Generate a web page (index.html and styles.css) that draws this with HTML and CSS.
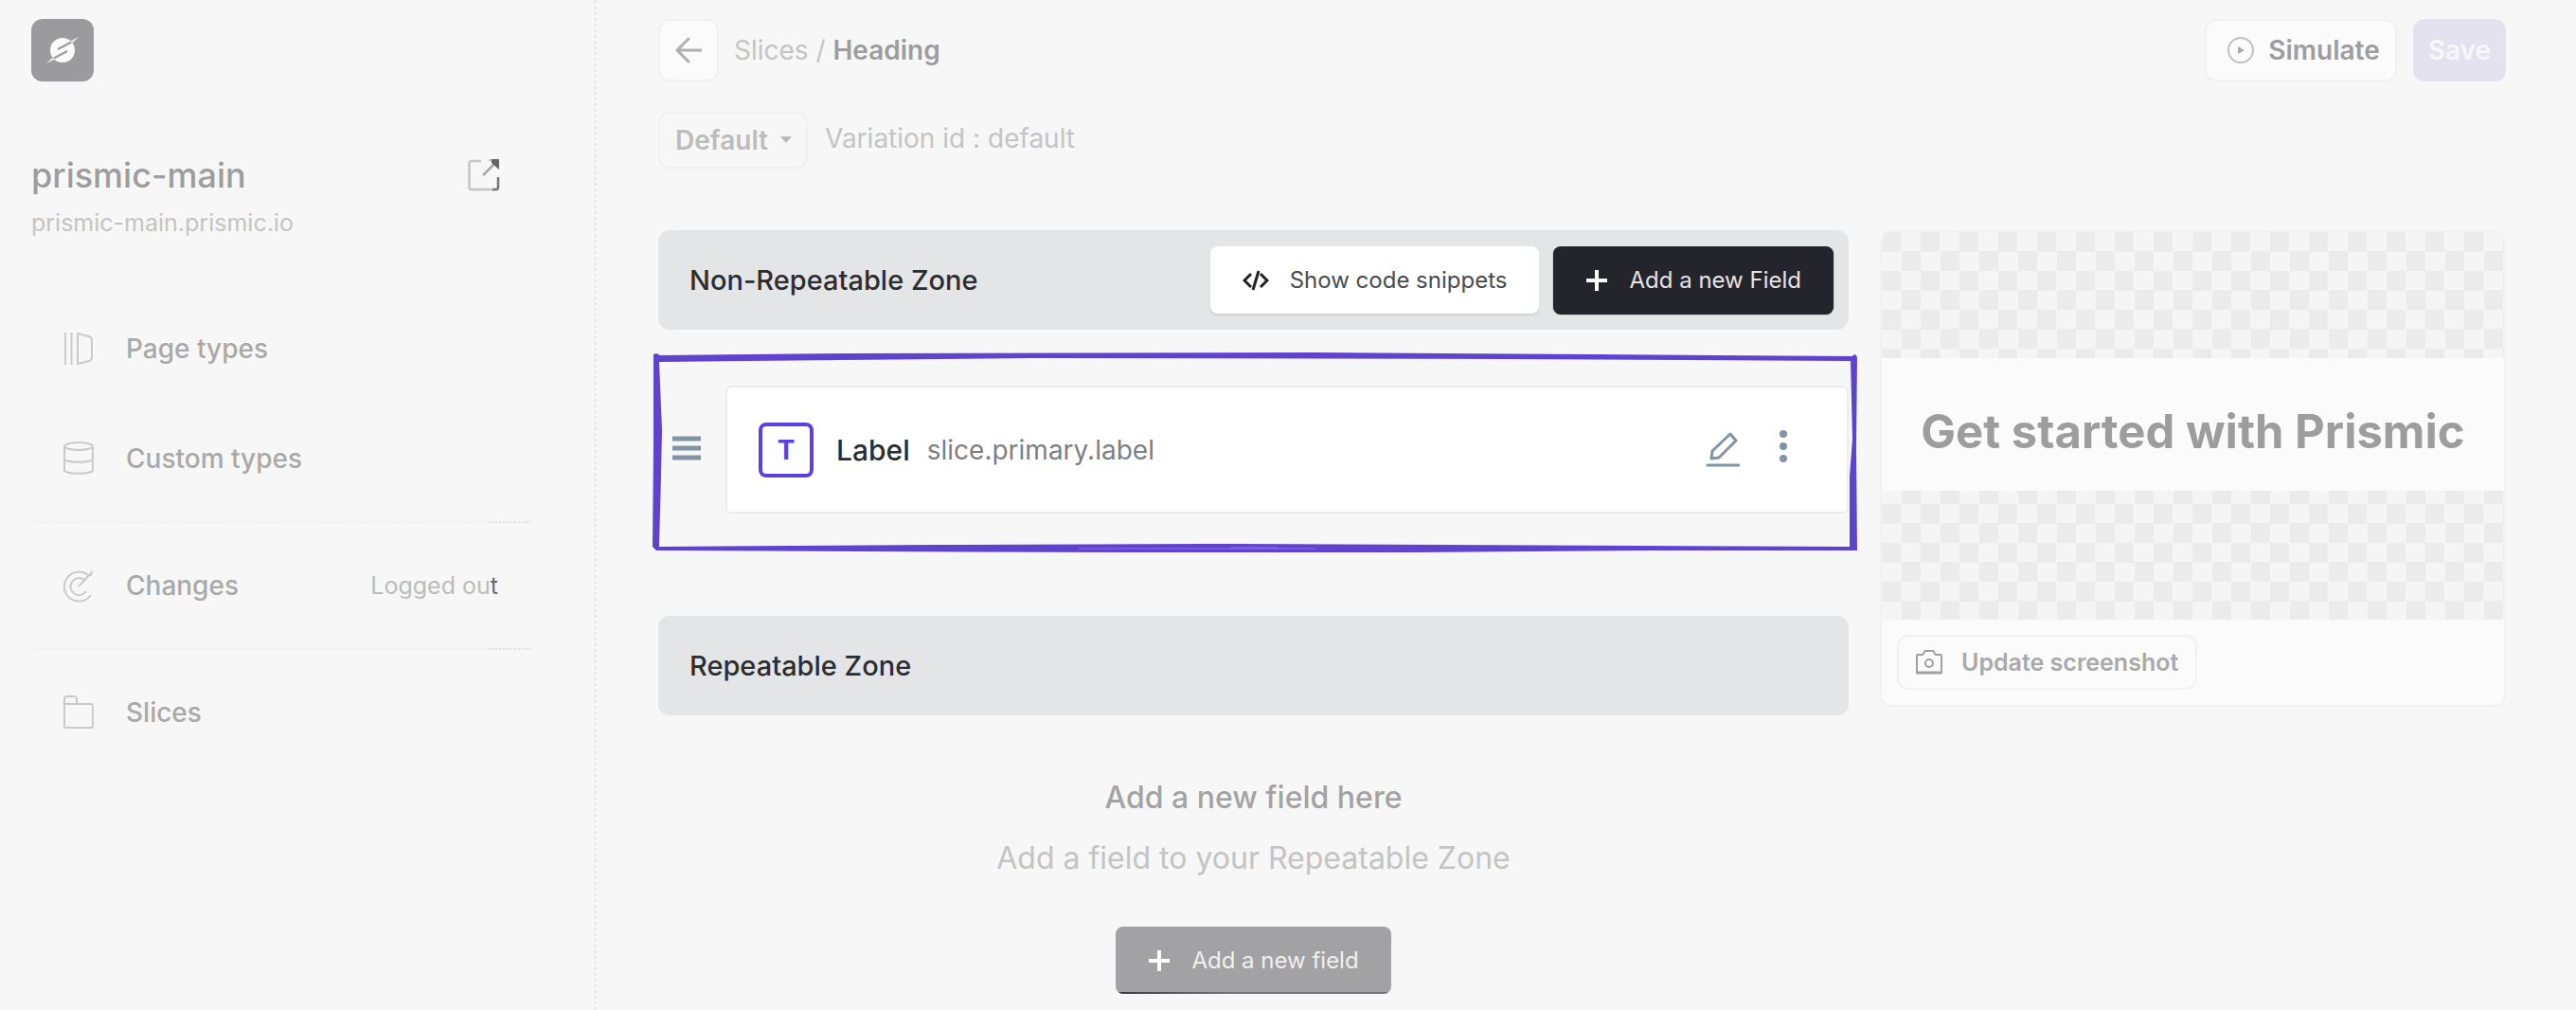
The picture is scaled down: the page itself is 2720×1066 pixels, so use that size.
FILE: index.html
```
<!DOCTYPE html>
<html lang="en">
<head>
	<meta charset="utf-8">
	<title>Slice Machine</title>
	<link rel="stylesheet" href="styles.css">
</head>
<body>
	<div class="app">
		<aside class="sidebar">
			<div class="logo">
				<svg width="34" height="30" viewBox="0 0 34 30">
					<circle cx="17" cy="15" r="13" fill="#fbfbfb"/>
					<path d="M12 14L29 5M22 16L5 25" stroke="#9b9b9e" stroke-width="2"/>
					<path d="M24 6L34 1l-6 6zM10 24L0 29l6-6z" fill="#e6e6e7"/>
				</svg>
			</div>
			<div class="repo">
				<div>
					<h1>prismic-main</h1>
					<p>prismic-main.prismic.io</p>
				</div>
				<a href="#" class="open" aria-label="Open repository">
					<svg width="34" height="34" viewBox="0 0 34 34" fill="none">
						<path d="M14 2H4a2.500 2.500 0 0 0-2.500 2.500v25A2.500 2.500 0 0 0 4 32h23" stroke="#c4c4c4" stroke-width="2.500"/>
						<path d="M26 32h3.500a2.500 2.500 0 0 0 2.500-2.500V19" stroke="#747476" stroke-width="2.500"/>
						<path d="M16 17L28 5" stroke="#a9a9ab" stroke-width="2.500"/>
						<path d="M22 1h4" stroke="#c4c4c4" stroke-width="2.500"/>
						<path d="M25 0h8v11l-8-7z" fill="#66666a"/>
					</svg>
				</a>
			</div>
			<nav>
				<ul>
					<li><a href="#">
						<svg class="icon" width="32" height="36" viewBox="0 0 32 36"><path d="M2 1v34M8.500 1v34M15 2v32l12-3q3-1 3-4V9q0-3-3-4z"/></svg>
						Page types
					</a></li>
					<li><a href="#">
						<svg class="icon" width="32" height="36" viewBox="0 0 32 36"><ellipse cx="16" cy="5" rx="15" ry="4"/><path d="M1 5v25c0 5 30 5 30 0V5M1 18c0 5 30 5 30 0"/></svg>
						Custom types
					</a></li>
				</ul>
				<ul>
					<li><a href="#">
						<svg class="icon" width="32" height="36" viewBox="0 0 32 36"><path d="M26 7A15.500 15.500 0 1 0 29 28M22 12A9 9 0 1 0 24 24M16 19L31 3M26 7h4"/></svg>
						Changes
						<span class="status">Logged ou<b>t</b></span>
					</a></li>
				</ul>
				<ul>
					<li><a href="#">
						<svg class="icon" width="32" height="36" viewBox="0 0 32 36"><path d="M1 9V4q0-3 3-3h7q3 0 3 4v4M1 9h28q2 0 2 2v21q0 2-2 2H3q-2 0-2-2z"/></svg>
						Slices
					</a></li>
				</ul>
			</nav>
		</aside>

		<main>
			<header class="topbar">
				<button class="btn-light back" aria-label="Back">
					<svg width="28" height="28" viewBox="0 0 28 28" fill="none" stroke="#b0b0b0" stroke-width="3" stroke-linecap="round" stroke-linejoin="round"><path d="M27 14H2M14 2L2 14l12 12"/></svg>
				</button>
				<div class="crumbs"><a href="#">Slices</a> / <strong>Heading</strong></div>
				<button class="btn-light simulate">
					<svg width="30" height="30" viewBox="0 0 30 30"><circle cx="15" cy="15" r="13" fill="none" stroke="#c2c2c2" stroke-width="2"/><path d="M12 11l7 4-7 4z" fill="#a9a9ab"/></svg>
					Simulate
				</button>
				<button class="save">Save</button>
			</header>

			<div class="variation">
				<div class="select">
					<select id="variation" aria-label="Variation">
						<option>Default</option>
					</select>
					<svg width="12" height="8" viewBox="0 0 12 8"><path d="M0 0h12L6 7z" fill="#b8b8b8"/></svg>
				</div>
				<label for="variation">Variation id : default</label>
			</div>

			<div class="content">
				<div class="zones">
					<section>
						<div class="zone-head">
							<h2>Non-Repeatable Zone</h2>
							<button class="btn btn-white">
								<svg width="28" height="22" viewBox="0 0 28 22" fill="none" stroke="#222" stroke-width="3"><path d="M9 4L2 11l7 7M19 4l7 7-7 7M17 1l-6 20"/></svg>
								Show code snippets
							</button>
							<button class="btn btn-dark">
								<svg width="24" height="24" viewBox="0 0 24 24" stroke="#fff" stroke-width="4"><path d="M12 1v22M1 12h22"/></svg>
								Add a new Field
							</button>
						</div>
						<div class="field">
							<!-- hand drawn frame -->
							<svg class="frame" viewBox="0 0 1272 209" preserveAspectRatio="none">
								<path fill="#5f43cf" d="M1 1L4 0L8 2L200 0L700 -1L1000 1L1266 3L1270 1L1272 4L1271 100L1272 208L1050 208L800 210L500 210L220 209L4 208L0 204L1 100ZM7 9L10 80L9 130L7 204L300 202L620 201L1264 204L1264 130L1267 90L1265 8L900 6L400 5Z"/>
								<path stroke="#8a70e8" d="M450 206h250M610 205h50"/>
							</svg>
							<button class="drag" aria-label="Reorder">
								<svg width="30" height="30" viewBox="0 0 30 30" stroke="#8193a5" stroke-width="5"><path d="M0 3h30M0 13h30M0 23h30"/></svg>
							</button>
							<div class="card">
								<span class="type">T</span>
								<strong>Label</strong>
								<span class="path">slice.primary.label</span>
								<button class="edit" aria-label="Edit field">
									<svg width="36" height="38" viewBox="0 0 36 38" fill="none" stroke="#8193a5" stroke-width="3" stroke-linecap="round" stroke-linejoin="round"><path d="M2 35h33M6 28l1-8L26 2l6 7-18 18z"/></svg>
								</button>
								<button class="more" aria-label="More">
									<svg width="8" height="42" viewBox="0 0 8 42" fill="#8193a5"><circle cx="4" cy="4" r="4"/><circle cx="4" cy="17" r="4"/><circle cx="4" cy="30" r="4"/></svg>
								</button>
							</div>
						</div>
					</section>

					<section class="repeatable">
						<div class="zone-head">
							<h2>Repeatable Zone</h2>
						</div>
						<div class="empty">
							<h3>Add a new field here</h3>
							<p>Add a field to your Repeatable Zone</p>
							<button class="btn btn-gray">
								<svg width="24" height="24" viewBox="0 0 24 24" stroke="#fff" stroke-width="4"><path d="M12 1v22M1 12h22"/></svg>
								Add a new field
							</button>
						</div>
					</section>
				</div>

				<div class="preview">
					<div class="checker">
						<div class="shot">Get started with Prismic</div>
					</div>
					<div class="preview-foot">
						<button class="btn-light update">
							<svg width="28" height="26" viewBox="0 0 28 26" fill="none" stroke="#a0a0a0" stroke-width="2"><path d="M1 6q0-1 1-1h5l3-4h8l3 4h5q1 0 1 1v18H1z"/><path d="M1 24h26" stroke-width="3"/><circle cx="14" cy="14" r="4"/></svg>
							Update screenshot
						</button>
					</div>
				</div>
			</div>
		</main>
	</div>
</body>
</html>
```
FILE: styles.css
```
* {
	box-sizing: border-box;
	margin: 0;
	padding: 0;
}
body {
	background: #f7f7f7;
	font-family: Inter, "Liberation Sans", sans-serif;
	font-size: 28px;
	color: #c4c4c4;
}
a {
	color: inherit;
	text-decoration: none;
}
ul {
	list-style: none;
}
button, select {
	font: inherit;
	color: inherit;
	border: 0;
	background: none;
}
button {
	display: flex;
	align-items: center;
	justify-content: center;
	white-space: nowrap;
}
svg {
	display: block;
	flex: none;
}
.app {
	display: flex;
	min-height: 100vh;
}

/* sidebar */
.sidebar {
	width: 630px;
	flex: none;
	padding: 20px 67px 0 33px;
	border-right: 3px dotted #ebebeb;
}
.logo {
	display: flex;
	align-items: center;
	justify-content: center;
	width: 66px;
	height: 66px;
	border-radius: 12px;
	background: #9b9b9e;
}
.repo {
	display: flex;
	justify-content: space-between;
	margin: 77px 32px 59px 0;
}
.repo h1 {
	font-size: 36px;
	font-weight: 500;
	line-height: 44px;
	color: #9d9d9d;
}
.repo p {
	margin-top: 12px;
	font-size: 25px;
	line-height: 32px;
}
.open {
	margin-top: 5px;
}
nav ul {
	position: relative;
	padding: 8px 0;
	border-bottom: 2px dotted #eee;
}
nav ul::after {
	content: "";
	position: absolute;
	right: 0;
	bottom: -2px;
	width: 44px;
	border-bottom: 2px dotted #e4e4e4;
}
nav ul:first-child {
	padding-top: 0;
}
nav ul:last-child {
	border: 0;
}
nav ul:last-child::after {
	display: none;
}
nav a {
	display: flex;
	align-items: center;
	gap: 34px;
	height: 116px;
	padding: 0 34px;
	font-weight: 500;
	color: #a9a9a9;
}
.icon {
	fill: none;
	stroke: #cacaca;
	stroke-width: 2;
}
.status {
	margin-left: auto;
	font-size: 25px;
	font-weight: 400;
	color: #bcbcbc;
}
.status b {
	font-weight: 400;
	color: #6c6c6e;
}

/* main */
main {
	flex: 1;
	min-width: 0;
	padding: 20px 74px 0 65px;
}
.topbar {
	display: flex;
	align-items: center;
	height: 66px;
}
.topbar button {
	height: 66px;
	border-radius: 12px;
	font-weight: 600;
}
.btn-light {
	background: #fbfbfb;
	border: 2px solid #f1f1f1;
}
.back {
	width: 64px;
}
.crumbs {
	margin: 0 auto 0 16px;
}
.crumbs strong {
	font-weight: 600;
	color: #9d9d9d;
}
.simulate {
	gap: 14px;
	padding: 0 16px 0 21px;
	margin-right: 17px;
	color: #9d9d9f;
}
.save {
	padding: 0 16px;
	color: #f7f7fa;
	background: #e4e2ef;
}
.variation {
	display: flex;
	gap: 18px;
	margin-top: 32px;
	line-height: 56px;
}
.select {
	position: relative;
}
.select select {
	appearance: none;
	width: 158px;
	height: 60px;
	padding: 0 16px;
	border: 2px solid #f0f0f0;
	border-radius: 12px;
	font-weight: 600;
	color: #bcbcbc;
}
.select svg {
	position: absolute;
	right: 17px;
	top: 26px;
	pointer-events: none;
}
.content {
	display: flex;
	align-items: flex-start;
	gap: 33px;
	margin-top: 65px;
}
.zones {
	flex: 1;
	min-width: 0;
}
.zone-head {
	display: flex;
	align-items: center;
	gap: 15px;
	height: 105px;
	padding: 0 16px 0 33px;
	border-radius: 12px;
	background: #e4e5e7;
}
.zone-head h2 {
	margin-right: auto;
	font-size: 29px;
	font-weight: 500;
	color: #2c2d30;
}
.btn {
	height: 71px;
	gap: 22px;
	padding: 0 34px;
	border-radius: 8px;
	font-size: 24px;
}
.btn-white {
	background: #fff;
	color: #4a4b4d;
	box-shadow: 0 2px 2px #d0d2d4;
}
.btn-dark {
	background: #24252c;
	color: #e4e4e6;
	box-shadow: 0 1px 1px #111;
}
.btn-gray {
	background: linear-gradient(90deg, #3a3a3c, #727274 40%) bottom / 100% 2px no-repeat #a2a2a4;
	color: #f0f0f0;
}
.field {
	position: relative;
	display: flex;
	align-items: center;
	margin-top: 25px;
	padding: 34px 0 40px 15px;
}
.frame {
	position: absolute;
	top: 0;
	left: -6px;
	width: calc(100% + 15px);
	height: 100%;
	overflow: visible;
	pointer-events: none;
}
.drag {
	margin-right: 26px;
}
.card {
	display: flex;
	align-items: center;
	flex: 1;
	height: 135px;
	padding: 0 63px 0 33px;
	border: 2px solid #ececec;
	border-radius: 6px;
	background: #fff;
}
.type {
	display: flex;
	align-items: center;
	justify-content: center;
	width: 58px;
	height: 58px;
	border: 4px solid #5b41e0;
	border-radius: 8px;
	font-size: 28px;
	font-weight: 700;
	color: #5b41e0;
}
.card strong {
	margin: 0 18px 0 24px;
	font-size: 30px;
	font-weight: 500;
	color: #2c2d30;
}
.path {
	margin-right: auto;
	color: #7d7f82;
}
.edit {
	margin-right: 42px;
}
.repeatable {
	margin-top: 68px;
}
.empty {
	display: flex;
	flex-direction: column;
	align-items: center;
	padding-top: 67px;
	font-size: 32px;
	line-height: 40px;
}
.empty h3 {
	font-size: 32px;
	font-weight: 500;
	color: #a3a3a3;
}
.empty p {
	margin: 24px 0 52px;
}

/* preview */
.preview {
	width: 661px;
	flex: none;
	overflow: hidden;
	border: 2px solid #f1f1f1;
	border-radius: 12px;
	background: #fbfbfb;
}
.checker {
	padding: 133px 0 136px;
	background: repeating-conic-gradient(#f5f5f5 0 25%, #ebebeb 0 50%) 0 0 / 41px 41px;
}
.shot {
	padding: 48px 0 32px;
	background: #fbfbfb;
	color: #9d9d9d;
	font-size: 49px;
	font-weight: 700;
	line-height: 60px;
	text-align: center;
	white-space: nowrap;
}
.preview-foot {
	padding: 16px;
}
.update {
	height: 58px;
	gap: 20px;
	padding: 0 18px;
	border-radius: 12px;
	font-size: 25px;
	font-weight: 600;
	color: #a9a9a9;
}
```
